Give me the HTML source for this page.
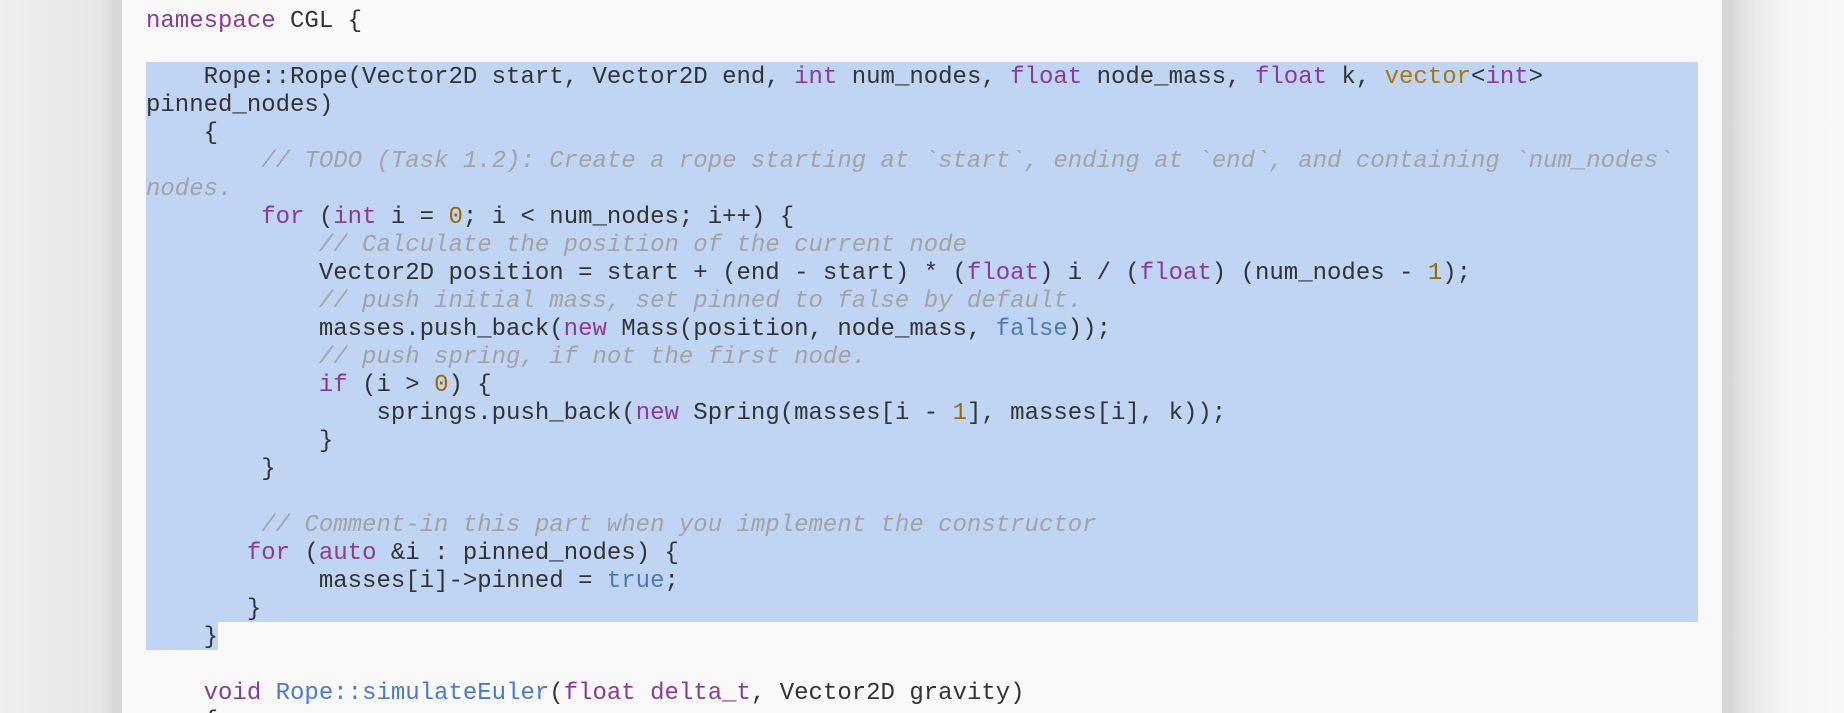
<!DOCTYPE html>
<html><head><style>
html,body{margin:0;padding:0;width:1844px;height:713px;overflow:hidden;background:linear-gradient(90deg,#efefef 0,#e6e6e6 100px,#dcdcdc 112px);}
.right{position:absolute;left:1732px;top:0;width:112px;height:713px;background:linear-gradient(90deg,#d9d9d9 0,#ececec 25px,#f6f6f6 60px,#f8f8f8 100%);}
.bl{position:absolute;left:112px;top:0;width:10px;height:713px;background:#d7d7d9;}
.br{position:absolute;left:1722px;top:0;width:10px;height:713px;background:#d7d7d9;}
.card{position:absolute;left:122px;top:0;width:1600px;height:713px;background:#f9f9f9;}
.hl{position:absolute;background:#c0d4f4;}
.code{position:absolute;left:146px;top:8px;height:705px;overflow:hidden;font-family:"Liberation Mono",monospace;font-size:24px;line-height:28px;color:#333;white-space:pre;}
.k{color:#8b3a9b}.t{color:#a67a10}.n{color:#9a6a00}.c{color:#a3a3a3;font-style:italic}.f{color:#4a78d8}.b{color:#4b7ab8}
</style></head><body>
<div class="right"></div><div class="bl"></div><div class="br"></div>
<div class="card"></div>
<div class="hl" style="left:146px;top:62px;width:1552px;height:560px"></div>
<div class="hl" style="left:146px;top:622px;width:72px;height:28px"></div>
<div class="code"><span class="k">namespace</span> CGL {

    Rope::Rope(Vector2D start, Vector2D end, <span class="k">int</span> num_nodes, <span class="k">float</span> node_mass, <span class="k">float</span> k, <span class="t">vector</span>&lt;<span class="k">int</span>&gt;
pinned_nodes)
    {
        <span class="c">// TODO (Task 1.2): Create a rope starting at `start`, ending at `end`, and containing `num_nodes`</span>
<span class="c">nodes.</span>
        <span class="k">for</span> (<span class="k">int</span> i = <span class="n">0</span>; i &lt; num_nodes; i++) {
            <span class="c">// Calculate the position of the current node</span>
            Vector2D position = start + (end - start) * (<span class="k">float</span>) i / (<span class="k">float</span>) (num_nodes - <span class="n">1</span>);
            <span class="c">// push initial mass, set pinned to false by default.</span>
            masses.push_back(<span class="k">new</span> Mass(position, node_mass, <span class="b">false</span>));
            <span class="c">// push spring, if not the first node.</span>
            <span class="k">if</span> (i &gt; <span class="n">0</span>) {
                springs.push_back(<span class="k">new</span> Spring(masses[i - <span class="n">1</span>], masses[i], k));
            }
        }

        <span class="c">// Comment-in this part when you implement the constructor</span>
       <span class="k">for</span> (<span class="k">auto</span> &amp;i : pinned_nodes) {
            masses[i]-&gt;pinned = <span class="b">true</span>;
       }
    }

    <span class="k">void</span> <span class="f">Rope::simulateEuler</span>(<span class="k">float</span> <span class="k">delta_t</span>, Vector2D gravity)
    {</div>
</body></html>
